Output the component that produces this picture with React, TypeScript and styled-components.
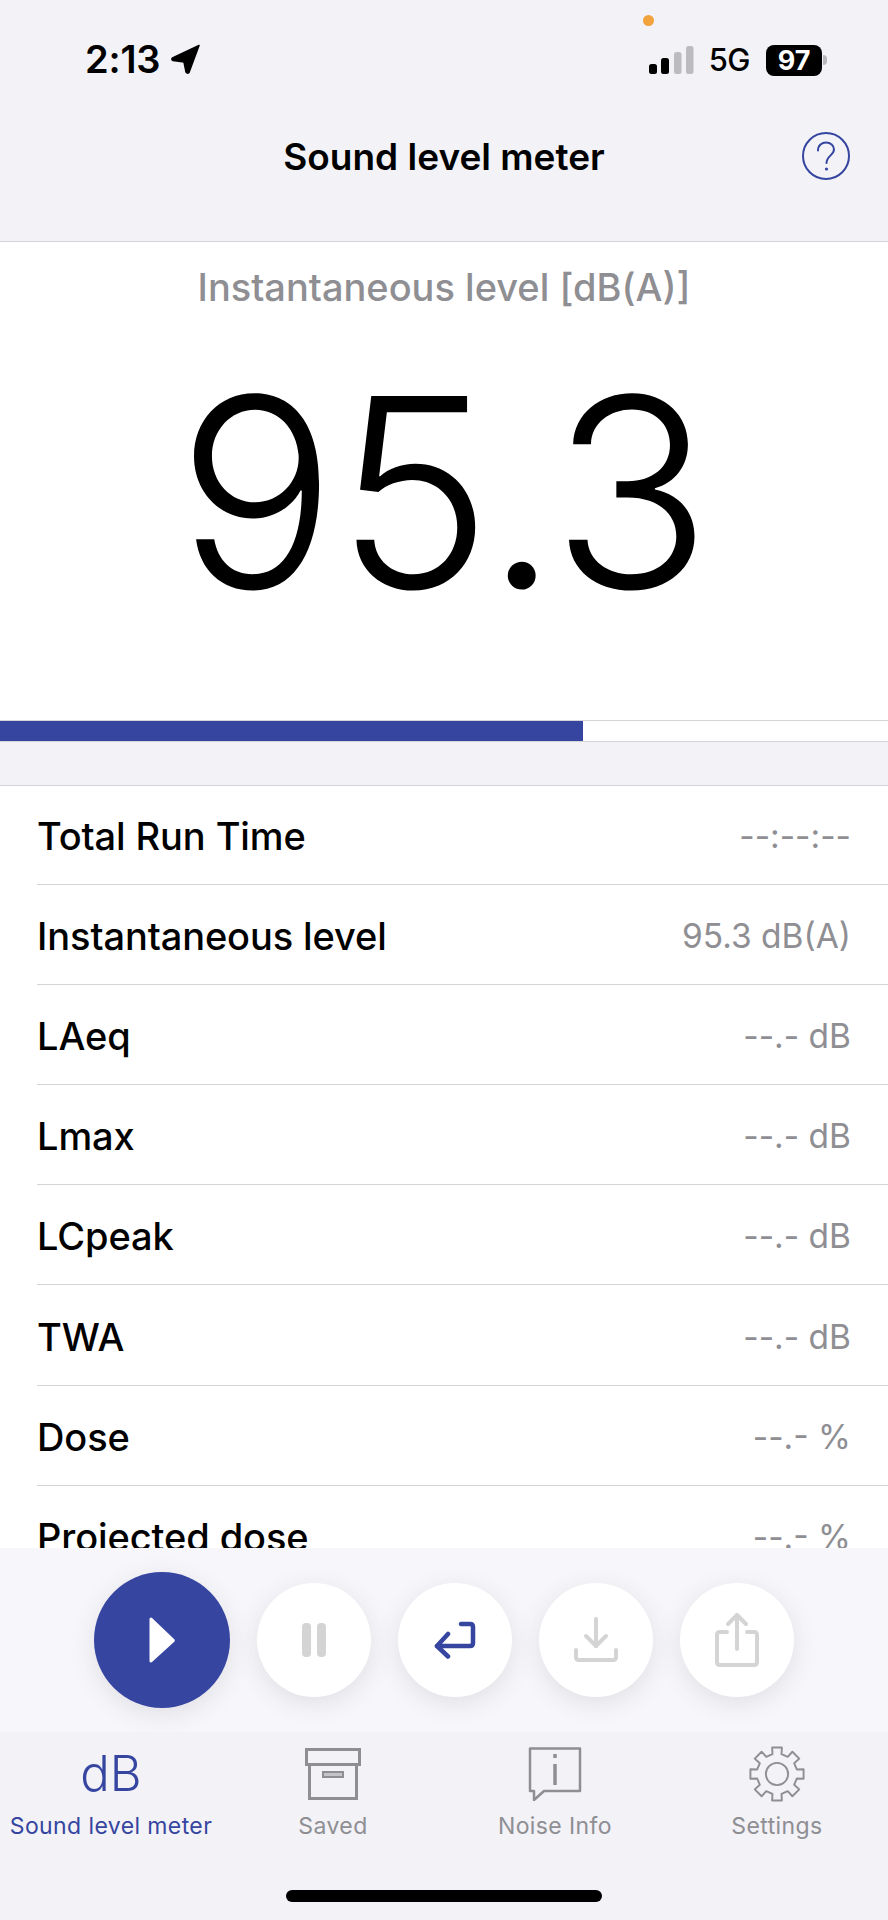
import React from 'react';
import styled, { createGlobalStyle } from 'styled-components';

const blue = '#3545a0';
const gray = '#8e8e93';
const line = '#d4d4d8';

const GlobalStyle = createGlobalStyle`
  html, body {
    margin: 0;
    padding: 0;
    background: #f2f2f7;
  }
  * {
    box-sizing: border-box;
  }
`;

const Screen = styled.div`
  width: 888px;
  height: 1920px;
  display: flex;
  flex-direction: column;
  overflow: hidden;
  position: relative;
  background: #f2f2f7;
  color: #000;
  font-family: Inter, 'Noto Sans', sans-serif;
`;

const StatusBar = styled.div`
  height: 110px;
  flex: none;
  display: flex;
  justify-content: space-between;
  padding: 45px 61px 0 85px;
`;

const StatusLeft = styled.div`
  display: flex;
  align-items: flex-start;
  gap: 11px;
`;

const Time = styled.span`
  font-size: 38px;
  line-height: 28px;
  font-weight: 600;
  letter-spacing: -0.2px;
`;

const StatusRight = styled.div`
  display: flex;
  align-items: center;
  height: 30px;
`;

const PrivacyDot = styled.span`
  position: absolute;
  left: 643px;
  top: 15px;
  width: 11px;
  height: 11px;
  border-radius: 50%;
  background: #f2a33c;
`;

const Network = styled.span`
  font-size: 31px;
  font-weight: 500;
  line-height: 30px;
  margin: 0 16px 0 15px;
  letter-spacing: -0.5px;
`;

const Battery = styled.span`
  width: 56px;
  height: 31px;
  border-radius: 8px;
  background: #000;
  color: #fff;
  font-size: 27px;
  font-weight: 700;
  line-height: 31px;
  text-align: center;
`;

const BatteryNub = styled.span`
  width: 4px;
  height: 10px;
  margin-left: 1px;
  border-radius: 0 4px 4px 0;
  background: #b8b8bc;
`;

const NavBar = styled.header`
  height: 132px;
  flex: none;
  display: flex;
  justify-content: center;
  position: relative;
  border-bottom: 1px solid ${line};
`;

const NavTitle = styled.h1`
  margin: 27px 0 0;
  font-size: 37px;
  line-height: 40px;
  font-weight: 600;
`;

const HelpButton = styled.span`
  position: absolute;
  left: 802px;
  top: 22px;
  width: 48px;
  height: 48px;
`;

const LevelCard = styled.section`
  height: 478px;
  flex: none;
  background: #fff;
  display: flex;
  flex-direction: column;
  align-items: center;
`;

const LevelCaption = styled.div`
  margin-top: 23px;
  font-size: 38px;
  line-height: 44px;
  font-weight: 500;
  color: ${gray};
`;

const LevelValue = styled.div`
  margin-top: 33px;
  font-size: 264px;
  line-height: 300px;
  font-weight: 300;
  letter-spacing: -0.5px;
`;

const Progress = styled.div`
  height: 22px;
  flex: none;
  background: #fff;
  border-top: 1px solid ${line};
  border-bottom: 1px solid ${line};
`;

const ProgressFill = styled.div`
  height: 100%;
  background: ${blue};
`;

const Spacer = styled.div`
  height: 43px;
  flex: none;
`;

const List = styled.div`
  flex: 1;
  min-height: 0;
  overflow: hidden;
  background: #fff;
  border-top: 1px solid ${line};
  padding-left: 37px;
`;

const Row = styled.div`
  height: 100.2px;
  display: flex;
  align-items: center;
  justify-content: space-between;
  padding: 3px 37px 0 0;
  border-bottom: 1px solid ${line};

  &:first-child {
    margin-top: -1.5px;
  }
`;

const RowLabel = styled.span`
  font-size: 38px;
  font-weight: 500;
  letter-spacing: -0.1px;
`;

const RowValue = styled.span`
  font-size: 33.5px;
  color: ${gray};
`;

const ActionPanel = styled.div`
  height: 184px;
  flex: none;
  background: #f7f7fb;
  display: flex;
  align-items: center;
  gap: 27.2px;
  padding: 0 0 0 93.5px;
`;

const RoundButton = styled.button<{ $primary?: boolean }>`
  flex: none;
  width: ${({ $primary }) => ($primary ? 136 : 114)}px;
  height: ${({ $primary }) => ($primary ? 136 : 114)}px;
  padding: 0;
  border: none;
  border-radius: 50%;
  background: ${({ $primary }) => ($primary ? blue : '#fff')};
  box-shadow: 0 6px 24px rgba(60, 60, 80, 0.13);
  display: flex;
  align-items: center;
  justify-content: center;
`;

const TabBar = styled.nav`
  height: 188px;
  flex: none;
  position: relative;
  display: grid;
  grid-template-columns: repeat(4, 1fr);
  background: #f2f2f7;
`;

const Tab = styled.div<{ $active?: boolean }>`
  display: flex;
  flex-direction: column;
  align-items: center;
  color: ${({ $active }) => ($active ? blue : gray)};
`;

const TabIcon = styled.div`
  height: 78px;
  margin-top: 3px;
  display: flex;
  align-items: center;
  justify-content: center;
`;

const DbGlyph = styled.span`
  font-size: 49px;
  line-height: 48px;
  font-weight: 300;
`;

const TabLabel = styled.span`
  margin-top: -1px;
  font-size: 23px;
  line-height: 28px;
  letter-spacing: 0.4px;
  white-space: nowrap;
`;

const HomeBar = styled.div`
  position: absolute;
  left: 286px;
  bottom: 18px;
  width: 316px;
  height: 12px;
  border-radius: 6px;
  background: #000;
`;

const rows = [
  ['Total Run Time', '--:--:--'],
  ['Instantaneous level', '95.3 dB(A)'],
  ['LAeq', '--.- dB'],
  ['Lmax', '--.- dB'],
  ['LCpeak', '--.- dB'],
  ['TWA', '--.- dB'],
  ['Dose', '--.- %'],
  ['Projected dose', '--.- %'],
];

const off = '#d4d4d4';

const gearPath = (() => {
  const cx = 30;
  const cy = 30;
  const teeth = 8;
  const pts: string[] = [];
  for (let i = 0; i < teeth; i++) {
    const a = (i * Math.PI * 2) / teeth - Math.PI / 2;
    const step = Math.PI * 2 / teeth;
    const at = (r: number, d: number) =>
      `${(cx + r * Math.cos(a + d)).toFixed(1)} ${(cy + r * Math.sin(a + d)).toFixed(1)}`;
    pts.push(`${i === 0 ? 'M' : 'L'}${at(21, -step * 0.29)}`);
    pts.push(`L${at(28, -step * 0.23)}`);
    pts.push(`L${at(28, step * 0.23)}`);
    pts.push(`L${at(21, step * 0.29)}`);
  }
  return pts.join(' ') + ' Z';
})();

const App = () => {
  return (
    <Screen>
      <GlobalStyle />
      <PrivacyDot />
      <StatusBar>
        <StatusLeft>
          <Time>2:13</Time>
          <svg width="30" height="30" viewBox="0 0 30 30" style={{ marginTop: -1 }}>
            <path d="M28 1.5 L1.5 14 Q0 15.5 2 16.5 L13 18 L15 28 Q16.5 30 18 28.5 Z" fill="#000" stroke="#000" strokeWidth="1.5" strokeLinejoin="round" />
          </svg>
        </StatusLeft>
        <StatusRight>
          <svg width="45" height="28" viewBox="0 0 45 28">
            <rect x="0" y="18" width="8" height="10" rx="2.5" fill="#000" />
            <rect x="12" y="12" width="8" height="16" rx="2.5" fill="#000" />
            <rect x="25" y="6" width="7.5" height="22" rx="2.5" fill="#bcbcc0" />
            <rect x="37" y="0" width="7.5" height="28" rx="2.5" fill="#bcbcc0" />
          </svg>
          <Network>5G</Network>
          <Battery>97</Battery>
          <BatteryNub />
        </StatusRight>
      </StatusBar>

      <NavBar>
        <NavTitle>Sound level meter</NavTitle>
        <HelpButton>
          <svg width="48" height="48" viewBox="0 0 48 48" fill="none" stroke={blue} strokeWidth="2">
            <circle cx="24" cy="24" r="23" />
            <path d="M16 18.5 C16 13 20 10.5 24 10.5 C28.5 10.5 32 13.5 32 17.5 C32 23 24.5 24 24.5 31" strokeLinecap="round" />
            <circle cx="24.5" cy="37" r="1.6" fill={blue} stroke="none" />
          </svg>
        </HelpButton>
      </NavBar>

      <LevelCard>
        <LevelCaption>Instantaneous level [dB(A)]</LevelCaption>
        <LevelValue>95.3</LevelValue>
      </LevelCard>

      <Progress>
        <ProgressFill style={{ width: `${(583 / 888) * 100}%` }} />
      </Progress>
      <Spacer />

      <List>
        {rows.map(([label, value]) => (
          <Row key={label}>
            <RowLabel>{label}</RowLabel>
            <RowValue>{value}</RowValue>
          </Row>
        ))}
      </List>

      <ActionPanel>
        <RoundButton $primary>
          <svg width="26" height="46" viewBox="0 0 26 46">
            <path d="M2 2 L24 23 Q24.5 23.5 24 24 L2 44 Z" fill="#fff" stroke="#fff" strokeWidth="3" strokeLinejoin="round" />
          </svg>
        </RoundButton>
        <RoundButton>
          <svg width="24" height="34" viewBox="0 0 24 34">
            <rect x="0" y="0" width="9" height="34" rx="4" fill={off} />
            <rect x="15" y="0" width="9" height="34" rx="4" fill={off} />
          </svg>
        </RoundButton>
        <RoundButton>
          <svg width="42" height="38" viewBox="0 0 42 38" fill="none" stroke={blue} strokeWidth="4.5" strokeLinecap="round" strokeLinejoin="round">
            <path d="M27 3 H36 Q39 3 39 6 V22 Q39 25 36 25 H3" />
            <path d="M14 13 L3 25 L14 35.5" />
          </svg>
        </RoundButton>
        <RoundButton>
          <svg width="46" height="46" viewBox="0 0 46 46" fill="none" stroke={off} strokeWidth="4" strokeLinecap="round" strokeLinejoin="round">
            <path d="M23 2 V29" />
            <path d="M13 19 L23 29 L33 19" />
            <path d="M3 33 V40 Q3 43 6 43 H40 Q43 43 43 40 V33" />
          </svg>
        </RoundButton>
        <RoundButton>
          <svg width="44" height="56" viewBox="0 0 44 56" fill="none" stroke={off} strokeWidth="4" strokeLinecap="round" strokeLinejoin="round">
            <path d="M22 3 V37" />
            <path d="M13 12 L22 3 L31 12" />
            <path d="M12 20 H5 Q2 20 2 23 V50 Q2 53 5 53 H39 Q42 53 42 50 V23 Q42 20 39 20 H32" />
          </svg>
        </RoundButton>
      </ActionPanel>

      <TabBar>
        <Tab $active>
          <TabIcon>
            <DbGlyph>dB</DbGlyph>
          </TabIcon>
          <TabLabel>Sound level meter</TabLabel>
        </Tab>
        <Tab>
          <TabIcon>
            <svg width="56" height="52" viewBox="0 0 56 52" fill="none" stroke={gray} strokeWidth="3">
              <rect x="1.5" y="1.5" width="53" height="15" />
              <rect x="4.5" y="16.5" width="47" height="34" />
              <rect x="18" y="24" width="20" height="5" strokeWidth="2" fill="#c4c4c8" />
            </svg>
          </TabIcon>
          <TabLabel>Saved</TabLabel>
        </Tab>
        <Tab>
          <TabIcon>
            <svg width="54" height="54" viewBox="0 0 54 54" fill="none" stroke={gray} strokeWidth="2.5" strokeLinejoin="round">
              <path d="M2 1.5 H52 V44 H16 L6 53 V44 H2 Z" />
              <path d="M27 17 V38" strokeWidth="3.5" />
              <path d="M27 7 V11" strokeWidth="3.5" />
            </svg>
          </TabIcon>
          <TabLabel>Noise Info</TabLabel>
        </Tab>
        <Tab>
          <TabIcon>
            <svg width="58" height="58" viewBox="0 0 60 60" fill="none" stroke={gray} strokeWidth="2" strokeLinejoin="round">
              <path d={gearPath} />
              <circle cx="30" cy="30" r="11.5" />
            </svg>
          </TabIcon>
          <TabLabel>Settings</TabLabel>
        </Tab>
        <HomeBar />
      </TabBar>
    </Screen>
  );
};

export default App;
